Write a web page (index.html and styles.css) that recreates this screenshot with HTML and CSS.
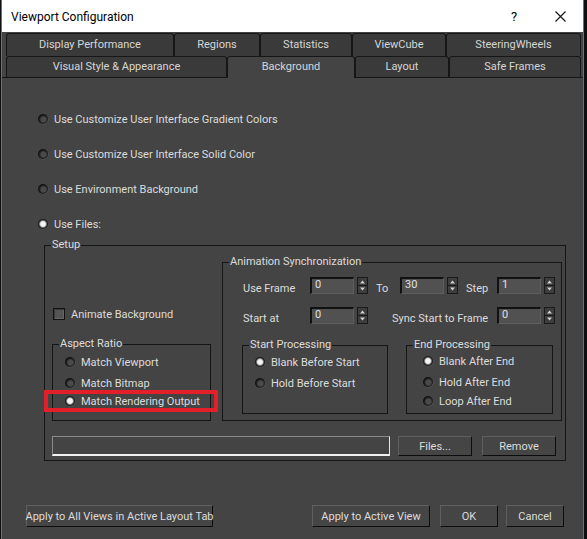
FILE: index.html
```html
<!DOCTYPE html>
<html>
<head>
<meta charset="utf-8">
<title>Viewport Configuration</title>
<link rel="stylesheet" href="styles.css">
</head>
<body>
<svg class="defs" width="0" height="0">
  <symbol id="spin" viewBox="0 0 11 17">
    <rect x="0.5" y="0.5" width="10" height="16" fill="#3d3d3d" stroke="#1a1a1a"/>
    <line x1="1" y1="8.5" x2="10" y2="8.5" stroke="#1a1a1a"/>
    <path d="M3 6.5L5.5 3.5L8 6.5Z" fill="#d0d0d0"/>
    <path d="M3 10.5L5.5 13.5L8 10.5Z" fill="#d0d0d0"/>
  </symbol>
</svg>
<div class="window">
  <div class="titlebar">
    <span class="title">Viewport Configuration</span>
    <span class="tbtn help">?</span>
    <span class="tbtn close"><svg width="11" height="11" viewBox="0 0 11 11"><path d="M0.5 0.5L10.5 10.5M10.5 0.5L0.5 10.5" stroke="#111" stroke-width="1.1" fill="none"/></svg></span>
  </div>
  <div class="dialog">
    <div class="tabs">
      <div class="tabrow row1">
        <div class="tab t-dp">Display Performance</div>
        <div class="tab t-rg">Regions</div>
        <div class="tab t-st">Statistics</div>
        <div class="tab t-vc">ViewCube</div>
        <div class="tab t-sw">SteeringWheels</div>
      </div>
      <div class="tabrow row2">
        <div class="tab t-vs">Visual Style &amp; Appearance</div>
        <div class="tab t-bg active">Background</div>
        <div class="tab t-ly">Layout</div>
        <div class="tab t-sf">Safe Frames</div>
      </div>
    </div>
    <div class="pane">
      <div class="options">
        <div class="opt"><span class="radio"></span><span class="txt">Use Customize User Interface Gradient Colors</span></div>
        <div class="opt"><span class="radio"></span><span class="txt">Use Customize User Interface Solid Color</span></div>
        <div class="opt"><span class="radio"></span><span class="txt">Use Environment Background</span></div>
        <div class="opt"><span class="radio on"></span><span class="txt">Use Files:</span></div>
      </div>
      <fieldset class="group setup">
        <legend>Setup</legend>
        <div class="setup-grid">
          <div class="leftcol">
            <div class="check-row"><span class="checkbox"></span><span class="txt">Animate Background</span></div>
            <fieldset class="group aspect">
              <legend>Aspect Ratio</legend>
              <div class="radios aspect-radios">
                <div class="opt"><span class="radio"></span><span class="txt">Match Viewport</span></div>
                <div class="opt"><span class="radio"></span><span class="txt">Match Bitmap</span></div>
                <div class="opt marked"><span class="radio on"></span><span class="txt">Match Rendering Output</span><span class="redbox"></span></div>
              </div>
            </fieldset>
          </div>
          <fieldset class="group anim">
            <legend>Animation Synchronization</legend>
            <div class="anim-inner">
              <div class="sync-row">
                <span class="lbl l-first">Use Frame</span>
                <span class="num">0</span><svg class="spin" width="11" height="17"><use href="#spin"/></svg>
                <span class="lbl l-to">To</span>
                <span class="num">30</span><svg class="spin" width="11" height="17"><use href="#spin"/></svg>
                <span class="lbl l-step">Step</span>
                <span class="num">1</span><svg class="spin" width="11" height="17"><use href="#spin"/></svg>
              </div>
              <div class="sync-row second">
                <span class="lbl l-first">Start at</span>
                <span class="num">0</span><svg class="spin" width="11" height="17"><use href="#spin"/></svg>
                <span class="lbl l-sync">Sync Start to Frame</span>
                <span class="num">0</span><svg class="spin" width="11" height="17"><use href="#spin"/></svg>
              </div>
              <div class="proc-row">
                <fieldset class="group proc start">
                  <legend>Start Processing</legend>
                  <div class="radios start-radios">
                    <div class="opt"><span class="radio on"></span><span class="txt">Blank Before Start</span></div>
                    <div class="opt"><span class="radio"></span><span class="txt">Hold Before Start</span></div>
                  </div>
                </fieldset>
                <fieldset class="group proc end">
                  <legend>End Processing</legend>
                  <div class="radios end-radios">
                    <div class="opt"><span class="radio on"></span><span class="txt">Blank After End</span></div>
                    <div class="opt"><span class="radio"></span><span class="txt">Hold After End</span></div>
                    <div class="opt"><span class="radio"></span><span class="txt">Loop After End</span></div>
                  </div>
                </fieldset>
              </div>
            </div>
          </fieldset>
          <div class="files-row">
            <div class="pathfield"></div>
            <div class="btn files">Files...</div>
            <div class="btn remove">Remove</div>
          </div>
        </div>
      </fieldset>
      <div class="footer">
        <div class="btn apply-all">Apply to All Views in Active Layout Tab</div>
        <div class="btn apply-active">Apply to Active View</div>
        <div class="btn ok">OK</div>
        <div class="btn cancel">Cancel</div>
      </div>
    </div>
  </div>
</div>
</body>
</html>
```
FILE: styles.css
```css
* { box-sizing: border-box; }
html, body { margin: 0; padding: 0; }
body {
  width: 587px;
  height: 539px;
  overflow: hidden;
  background: #0e0f12;
  font-family: Roboto, "Noto Sans", sans-serif;
  font-size: 11px;
  color: #dcdcdc;
}
.defs { position: absolute; width: 0; height: 0; }

.window {
  margin-left: 1px;
  width: 583px;
  height: 539px;
  border-left: 1px solid #2f7fd0;
  border-right: 1px solid #2f7fd0;
  background: #444444;
  display: flex;
  flex-direction: column;
}

/* title bar */
.titlebar {
  height: 32px;
  background: #ffffff;
  display: flex;
  align-items: center;
  padding-left: 9px;
  padding-top: 1px;
  color: #000;
  font-size: 12px;
}
.title { flex: 1; }
.tbtn {
  width: 46px;
  height: 31px;
  display: flex;
  align-items: center;
  justify-content: center;
}
.help { font-size: 13px; }

/* tabs */
.dialog { flex: 1; display: flex; flex-direction: column; }
.tabs { padding: 1px 1px 0 4px; }
.tabrow { display: flex; }
.row1 { height: 23px; }
.row2 { height: 21px; }
.tab {
  border: 1px solid #161616;
  border-bottom: none;
  border-radius: 3px 3px 0 0;
  background: #3a3a3a;
  text-align: center;
  white-space: nowrap;
  color: #d6d6d6;
}
.row1 .tab { height: 23px; line-height: 22px; }
.row2 .tab { height: 21px; line-height: 19px; }
.row2 .tab.active {
  height: 22px;
  background: #444444;
  position: relative;
  z-index: 1;
}
.t-dp { width: 168px; }
.t-rg { width: 86px; }
.t-st { width: 92px; }
.t-vc { width: 94px; }
.t-sw { width: 135px; }
.t-vs { width: 221px; }
.t-bg { width: 128px; }
.t-ly { width: 94px; }
.t-sf { width: 132px; }

.pane {
  flex: 1;
  border-top: 1px solid #161616;
  padding-top: 34px;
}

/* radios / options */
.options {
  display: flex;
  flex-direction: column;
  gap: 21px;
  padding-left: 36px;
}
.opt {
  display: flex;
  align-items: center;
  height: 14px;
  line-height: 14px;
  white-space: nowrap;
}
.txt { padding-top: 1px; }
.radio {
  width: 10px;
  height: 10px;
  border-radius: 50%;
  margin-right: 6px;
  flex: none;
  background: radial-gradient(circle at 55% 55%, #4a4a4a 0 2.5px, #2a2a2a 3.5px, #101010 5px);
  box-shadow: 0.5px 0.5px 0 #5a5a5a;
}
.radio.on {
  background: radial-gradient(circle at 50% 50%, #f4f4f4 0 2.4px, #9a9a9a 3.2px, #2a2a2a 4.2px, #101010 5px);
}

/* group boxes */
.group {
  margin: 0;
  padding: 0;
  border: 1px solid #151515;
  min-width: 0;
}
.group > legend {
  margin-left: 6px;
  padding: 0 1px;
  line-height: 14px;
  height: 14px;
  font-size: 11px;
  white-space: nowrap;
}

.setup {
  margin-top: 7px;
  margin-left: 42px;
  width: 522px;
}
.setup-grid {
  display: grid;
  grid-template-columns: 159px 340px;
  column-gap: 11px;
  row-gap: 15px;
  padding: 3px 3px 4px 7px;
}
.leftcol { display: flex; flex-direction: column; }
.check-row {
  margin-top: 53px;
  margin-left: 1px;
  height: 12px;
  display: flex;
  align-items: center;
  white-space: nowrap;
}
.checkbox {
  width: 12px;
  height: 12px;
  margin-right: 6px;
  border: 1px solid #121212;
  background: #555555;
  box-shadow: inset 1px 1px 0 #3a3a3a, inset -1px -1px 0 #666;
  flex: none;
}
.aspect {
  margin-top: 17px;
  height: 84px;
}
.radios { display: flex; flex-direction: column; }
.aspect-radios { padding: 4px 0 0 12px; }
.aspect-radios .opt:nth-child(2) { margin-top: 7px; }
.aspect-radios .opt:nth-child(3) { margin-top: 4px; }
.marked { position: relative; }
.redbox {
  position: absolute;
  left: -21px;
  top: -4px;
  width: 174px;
  height: 22px;
  border: 4px solid #e3202a;
}

.anim { height: 166px; }
.anim-inner { padding: 8px 6px 6px 20px; }
.sync-row {
  display: flex;
  align-items: flex-end;
  height: 17px;
}
.sync-row.second { margin-top: 13px; }
.lbl {
  line-height: 14px;
  margin-bottom: -2px;
  white-space: nowrap;
  flex: none;
}
.l-first { width: 67px; }
.l-to { width: 32px; padding-left: 8px; }
.l-step { width: 39px; padding-left: 8px; }
.l-sync { width: 129px; padding-left: 24px; }
.num {
  width: 44px;
  height: 17px;
  flex: none;
  background: #515151;
  border-top: 2px solid #111;
  border-left: 2px solid #111;
  border-right: 1px solid #5e5e5e;
  border-bottom: 1px solid #5e5e5e;
  padding-left: 3px;
  line-height: 12px;
  font-size: 11px;
  color: #e0e0e0;
}
.spin { margin-left: 3px; flex: none; display: block; }

.proc-row {
  display: flex;
  gap: 18px;
  margin-top: 14px;
  margin-left: -1px;
}
.proc { height: 76px; }
.proc.start { width: 146px; }
.proc.end { width: 147px; }
.start-radios { padding: 3px 0 0 12px; }
.start-radios .opt:nth-child(2) { margin-top: 7px; }
.end-radios { padding: 2px 0 0 16px; }
.end-radios .opt:nth-child(2) { margin-top: 7px; }
.end-radios .opt:nth-child(3) { margin-top: 5px; }

.files-row {
  grid-column: 1 / -1;
  display: flex;
  height: 20px;
}
.pathfield {
  width: 338px;
  height: 20px;
  background: #444;
  border-top: 1px solid #8a8a8a;
  border-left: 1px solid #8a8a8a;
  border-right: 1px solid #e6e6e6;
  border-bottom: 2px solid #f2f2f2;
}
.btn {
  height: 20px;
  background: #454545;
  border-top: 1px solid #5f5f5f;
  border-left: 1px solid #5f5f5f;
  border-right: 1px solid #0d0d0d;
  border-bottom: 1px solid #0d0d0d;
  display: flex;
  align-items: center;
  justify-content: center;
  white-space: nowrap;
  color: #dcdcdc;
}
.files { width: 74px; margin-left: 8px; }
.remove { width: 74px; margin-left: 10px; }

.footer {
  margin-top: 44px;
  display: flex;
  padding: 0 19px 0 24px;
}
.footer .btn { height: 22px; }
.apply-all { width: 187px; }
.apply-active { width: 118px; margin-left: auto; }
.ok { width: 58px; margin-left: 10px; }
.cancel { width: 58px; margin-left: 8px; }
```
